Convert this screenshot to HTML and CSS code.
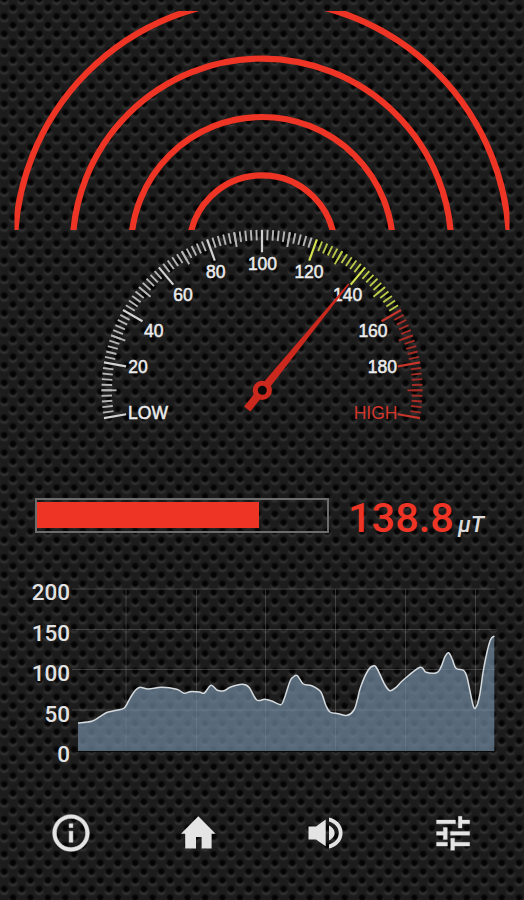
FILE: index.html
```html
<!DOCTYPE html>
<html lang="en">
<head>
    <meta charset="UTF-8">
    <meta name="viewport" content="width=device-width, initial-scale=1.0">
    <title>Metal Detector</title>
    <link rel="stylesheet" href="styles.css">
</head>
<body>
    <svg class="meter" width="524" height="440" viewBox="0 0 524 440">
        <defs>
            <clipPath id="wave-clip">
                <rect x="14.5" y="11" width="495" height="219"/>
            </clipPath>
        </defs>
        <g class="waves" clip-path="url(#wave-clip)">
            <circle cx="262" cy="248" r="72.7"/>
            <circle cx="262" cy="248" r="131"/>
            <circle cx="262" cy="248" r="189.4"/>
            <ellipse cx="262" cy="248" rx="247.2" ry="248.3"/>
        </g>
        <g id="ticks"></g>
        <g class="dial-labels">
            <text x="148" y="419.3">LOW</text>
            <text x="138" y="373.3">20</text>
            <text x="153.7" y="337.3">40</text>
            <text x="183" y="301.3">60</text>
            <text x="215.8" y="278">80</text>
            <text x="262.5" y="269.5">100</text>
            <text x="309" y="278">120</text>
            <text x="347.7" y="301.3">140</text>
            <text x="373" y="337.3">160</text>
            <text x="382.3" y="373.3">180</text>
            <text class="high" x="375.5" y="419.3">HIGH</text>
        </g>
        <g id="needle" class="needle">
            <path d="M-0.7 -137H0.7L4 -8V24H-4V-8Z"/>
            <circle r="9.6"/>
            <circle class="hole" r="4.5"/>
        </g>
    </svg>

    <div class="reading">
        <div class="bar"><div class="bar-fill" id="bar-fill"></div></div>
        <span class="value">138.8</span>
        <span class="unit">μT</span>
    </div>

    <div class="chart">
        <div class="scale">
            <span>200</span>
            <span>150</span>
            <span>100</span>
            <span>50</span>
            <span>0</span>
        </div>
        <svg class="plot" width="426" height="164" viewBox="-8 -1 426 164">
            <path class="grid" d="M-6 0H417M-6 40.5H417M-6 80.5H417M-6 121H417M48 0V162M118.5 0V162M187.5 0V162M257.5 0V162M327.5 0V162M397.5 0V162"/>
            <path class="base" d="M-6 162.3H417"/>
            <path class="area" id="area"/>
            <path class="line" id="line"/>
        </svg>
    </div>

    <nav class="toolbar">
        <svg width="44" height="44" viewBox="0 0 24 24">
            <path class="bold" d="M11 17h2v-6h-2v6zm1-15C6.48 2 2 6.48 2 12s4.48 10 10 10 10-4.48 10-10S17.52 2 12 2zm0 18c-4.41 0-8-3.59-8-8s3.59-8 8-8 8 3.59 8 8-3.59 8-8 8zM11 9h2V7h-2v2z"/>
        </svg>
        <svg width="44" height="44" viewBox="0 0 44 44">
            <path d="M22.3 5.2L39.6 22.8H35.6V37.4H25.6V26H20V37.4H9.2V22.8H5Z"/>
        </svg>
        <svg width="44" height="44" viewBox="0 0 44 44">
            <path d="M4.5 15.5H12L21.7 8.5V35.3L12 28.5H4.5ZM25 14.5C28 16 30.6 18.6 30.6 22C30.6 25.4 28 28 25 29.5ZM25 6.6C32.5 8 38.6 14.3 38.6 22C38.6 29.7 32.5 36 25 37.4V33.5C30.5 32 34.8 27.5 34.8 22C34.8 16.5 30.5 12 25 10.5Z"/>
        </svg>
        <svg width="44" height="44" viewBox="0 0 44 44">
            <path class="bold" d="M5.5 9H24.5V12.8H5.5ZM27.3 5.3H31V9H38.7V12.8H31V17H27.3ZM5.5 20.5H12.3V16.5H16.3V28.5H12.3V24.3H5.5ZM19.5 20.5H38.7V24.3H19.5ZM5.5 31.3H16.5V35.1H5.5ZM19.7 27.3H23.6V31.3H38.7V35.1H23.6V39.3H19.7Z"/>
        </svg>
    </nav>

    <script>
        const value = 138.8;
        const maxBar = 181;
        const cx = 262;
        const cy = 390.3;

        // dial: one degree per unit, 100 at the top
        let ticks = '';
        for (let v = 0; v <= 200; v += 2) {
            const major = v % 20 === 0;
            ticks += tick(v, major ? 138 : 150, major ? 'major' : '');
        }
        // half steps between the numbers
        for (let v = 10; v < 200; v += 20) {
            ticks += tick(v, 145.5, '');
        }

        function tick(v, inner, cls) {
            const color = v < 120 ? 'white' : v < 160 ? 'yellow' : 'red';
            return `<line class="tick ${color} ${cls}" y1="-160.5" y2="${-inner}" transform="translate(${cx} ${cy}) rotate(${v - 100})"/>`;
        }

        document.getElementById('ticks').innerHTML = ticks;
        document.getElementById('needle').setAttribute('transform', `translate(${cx + 0.3} ${cy}) rotate(${value - 100 + 0.3})`);
        document.getElementById('bar-fill').style.width = `${value / maxBar * 100}%`;

        // field history
        const points = [
            [0, 134], [13.7, 132.3], [22, 127.7], [29.3, 123.3], [38.7, 121.3], [46.3, 119], [52, 109.3], [57, 101.7],
            [62, 98.3], [70.3, 100], [83.7, 98.3], [98.7, 100.3], [106.3, 104.3], [112, 102.7], [121.3, 103], [126.3, 104],
            [133, 96.3], [139.3, 101.3], [146, 101.7], [152.7, 98], [164.3, 95.3], [171, 98.3], [178.7, 111], [186.7, 110.3],
            [193.7, 112], [202.7, 115.7], [206, 110.3], [212, 92.3], [215.3, 88], [219.3, 86.7], [225.3, 95], [233.7, 96.7],
            [242.7, 102.7], [247.7, 116], [252, 123], [260.3, 124.7], [269.3, 126.3], [276, 121], [279.3, 111], [282.7, 97.7],
            [290.3, 81], [295.7, 76.7], [299.3, 80], [307, 96], [312, 101.7], [318, 98.3], [325.3, 91], [342, 78.3],
            [348, 83.3], [358.7, 83.7], [362.7, 78.7], [367, 67.7], [370.7, 63.7], [374.3, 70.3], [378, 79.3], [386, 81.7],
            [389.3, 89.3], [395.3, 117], [398.7, 117], [402, 104.3], [406, 77.7], [412, 52], [416.3, 47]
        ];

        function smooth(p) {
            let d = `M${p[0]}`;
            for (let i = 0; i < p.length - 1; i++) {
                const a = p[i - 1] || p[i];
                const b = p[i];
                const c = p[i + 1];
                const e = p[i + 2] || c;
                d += `C${b[0] + (c[0] - a[0]) / 6} ${b[1] + (c[1] - a[1]) / 6} ${c[0] - (e[0] - b[0]) / 6} ${c[1] - (e[1] - b[1]) / 6} ${c[0]} ${c[1]}`;
            }
            return d;
        }

        const curve = smooth(points);
        document.getElementById('line').setAttribute('d', curve);
        document.getElementById('area').setAttribute('d', curve + 'V162H0Z');
    </script>
</body>
</html>
```
FILE: styles.css
```css
body {
    margin: 0;
    width: 524px;
    height: 900px;
    overflow: hidden;
    display: flex;
    flex-direction: column;
    font-family: Roboto, sans-serif;
    background-color: #1c1c1c;
    /* perforated metal: dark hole with a lighter lower rim, staggered */
    background-image:
        radial-gradient(circle at 50% 50%, #020202 0, #050505 2.2px, rgba(8, 8, 8, 0) 4.4px),
        radial-gradient(circle at 50% 50%, #020202 0, #050505 2.2px, rgba(8, 8, 8, 0) 4.4px),
        radial-gradient(ellipse 5.4px 4.2px at 50% 66%, #343434 0, #323232 50%, rgba(40, 40, 40, 0) 100%),
        radial-gradient(ellipse 5.4px 4.2px at 50% 66%, #343434 0, #323232 50%, rgba(40, 40, 40, 0) 100%);
    background-size: 17.467px 17.467px;
    background-position: 4.3px -1px, 13px 7.7px, 4.3px -1px, 13px 7.7px;
}
.meter {
    display: block;
    flex: none;
}
.waves {
    fill: none;
    stroke: #ee3425;
    stroke-width: 6.2;
}
.tick {
    stroke-width: 1.9;
}
.tick.major {
    stroke-width: 2.2;
}
.white {
    stroke: #b4b4b4;
}
.white.major {
    stroke: #d2d2d2;
}
.yellow {
    stroke: #b9c846;
}
.yellow.major {
    stroke: #d3e34d;
}
.red {
    stroke: #a52c25;
}
.red.major {
    stroke: #c8352b;
}
.dial-labels {
    font-family: "Liberation Sans", sans-serif;
    font-size: 17.5px;
    fill: #ececec;
    stroke: #ececec;
    stroke-width: 0.5;
    text-anchor: middle;
}
.dial-labels .high {
    fill: #d3352b;
    stroke: none;
}
.needle {
    fill: #cb281e;
}
.needle .hole {
    fill: #080808;
}
.reading {
    display: flex;
    height: 100px;
    padding: 58px 0 0 35px;
    box-sizing: border-box;
}
.bar {
    width: 294px;
    height: 35px;
    box-sizing: border-box;
    border: 2px solid #6c6c6c;
    padding: 2px 0;
}
.bar-fill {
    height: 26px;
    background-color: #ee3425;
}
.value {
    margin-left: 19px;
    font-size: 41.5px;
    font-weight: 500;
    line-height: 39px;
    color: #ee3425;
}
.unit {
    margin-left: 4px;
    font-size: 22.5px;
    font-style: italic;
    font-weight: 500;
    line-height: 52px;
    color: #dcdcdc;
}
.chart {
    display: flex;
    height: 240px;
    padding-top: 48px;
    box-sizing: border-box;
}
.scale {
    width: 70px;
    margin-top: -16px;
    font-size: 22.5px;
    font-weight: 500;
    line-height: 40.5px;
    text-align: right;
    color: #e2e2e2;
}
.scale span {
    display: block;
}
.plot {
    display: block;
}
.grid {
    fill: none;
    stroke: rgba(150, 150, 150, 0.33);
}
.base {
    stroke: #090909;
    stroke-width: 2;
}
.area {
    fill: rgba(114, 139, 161, 0.7);
}
.line {
    fill: none;
    stroke: #d5dade;
    stroke-width: 1.5;
}
.toolbar {
    display: flex;
    justify-content: space-between;
    padding: 31px 49px 0;
}
.toolbar svg {
    fill: #e4e4e4;
    stroke: #e4e4e4;
    stroke-width: 0;
}
.toolbar .bold {
    stroke-width: 0.3;
}
```
